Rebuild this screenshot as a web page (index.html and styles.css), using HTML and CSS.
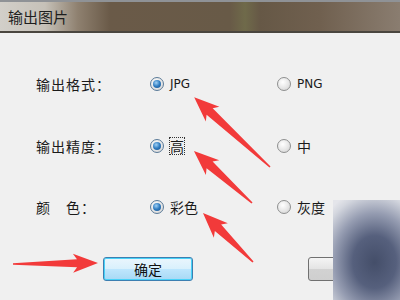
FILE: index.html
```html
<!DOCTYPE html>
<html lang="zh-CN">

<head>
    <meta charset="UTF-8">
    <title>输出图片</title>
    <link rel="stylesheet" href="styles.css">
</head>

<body>
    <div class="dialog">
        <div class="titlebar">输出图片</div>

        <div class="form">
            <div class="label">输出格式：</div>
            <div class="option"><span class="radio checked"></span><span class="latin">JPG</span></div>
            <div class="option"><span class="radio"></span><span class="latin">PNG</span></div>

            <div class="label">输出精度：</div>
            <div class="option"><span class="radio checked"></span><span class="focus">高</span></div>
            <div class="option"><span class="radio"></span><span>中</span></div>

            <div class="label">颜　色：</div>
            <div class="option"><span class="radio checked"></span><span>彩色</span></div>
            <div class="option"><span class="radio"></span><span>灰度</span></div>
        </div>

        <div class="buttons">
            <button class="btn primary">确定</button>
            <button class="btn">取消</button>
        </div>
    </div>

    <!-- red arrows drawn over the screenshot -->
    <svg class="arrows" width="400" height="300" viewBox="0 0 400 300">
        <g fill="#f23a3a">
            <path transform="translate(270,167) rotate(222.6)" d="M0,-0.8 L82,-4.5 L78,-10 L103,0 L78,10 L82,4.5 L0,0.8 Z" />
            <path transform="translate(252,203) rotate(221.9)" d="M0,-0.8 L57,-4.5 L53,-10 L78,0 L53,10 L57,4.5 L0,0.8 Z" />
            <path transform="translate(253,262) rotate(224.4)" d="M0,-0.8 L49,-4.5 L45,-10 L70,0 L45,10 L49,4.5 L0,0.8 Z" />
            <path transform="translate(13,264) rotate(-0.7)" d="M0,-0.8 L64,-4 L60,-9.5 L85,0 L60,9.5 L64,4 L0,0.8 Z" />
        </g>
    </svg>

    <div class="smudge"></div>
</body>

</html>
```

FILE: styles.css
```css
* {
    padding: 0;
    margin: 0;
    box-sizing: border-box;
}

body {
    width: 400px;
    height: 300px;
    overflow: hidden;
    background-color: #f0f0f0;
    font-family: "Noto Sans CJK SC", "Liberation Sans", sans-serif;
    font-size: 14px;
    color: #1a1a1a;
    position: relative;
}

.titlebar {
    height: 33px;
    padding-left: 8px;
    line-height: 29px;
    font-size: 15px;
    color: #1e1e1e;
    border-top: 2px solid #8f9296;
    border-bottom: 2px solid #4a463f;
    background: linear-gradient(to right, #d2cfc9 0px, #c6c1b8 45px, #8e806f 78px, #6a5a48 110px, #685a47 230px, #6f6a4a 245px, #665846 260px, #70604f 320px, #8a7d70 400px);
}

.form {
    display: grid;
    grid-template-columns: 114px 127px auto;
    grid-auto-rows: 20px;
    row-gap: 41.5px;
    padding: 41px 0 0 36px;
    align-items: center;
}

.label {
    letter-spacing: 1px;
}

.option {
    display: flex;
    align-items: center;
    gap: 6px;
}

.radio {
    width: 14px;
    height: 14px;
    border-radius: 50%;
    border: 1px solid #8e8f8f;
    background: radial-gradient(circle at 40% 35%, #ffffff 0%, #e6e6e6 55%, #cfcfcf 100%);
    position: relative;
}

.radio.checked {
    border-color: #5a7a98;
}

.radio.checked::after {
    content: "";
    position: absolute;
    left: 2px;
    top: 2px;
    width: 8px;
    height: 8px;
    border-radius: 50%;
    background: radial-gradient(circle at 40% 35%, #9fd0f5 0%, #2f7cc0 50%, #1b4f8a 100%);
}

.latin {
    font-family: "DejaVu Sans", sans-serif;
    font-size: 12px;
}

.focus {
    outline: 1px dotted #333;
    outline-offset: 0;
    line-height: 16px;
}

.buttons {
    display: flex;
    padding: 40px 0 0 103px;
    gap: 115px;
}

.btn {
    width: 90px;
    height: 24px;
    border-radius: 3px;
    border: 1px solid #707070;
    background: linear-gradient(#f4f4f4, #e4e4e4 50%, #d2d2d2 51%, #cfcfcf);
    font-family: "Noto Sans CJK SC", sans-serif;
    font-size: 14px;
    color: #111;
}

.btn.primary {
    border-color: #3c7fb1;
    background: linear-gradient(#eaf6fd, #d9f0fc 50%, #bee6fd 51%, #a7d9f5);
    box-shadow: inset 0 0 0 1px #48d2f8;
}

.arrows {
    position: absolute;
    left: 0;
    top: 0;
}

.smudge {
    position: absolute;
    left: 333px;
    top: 200px;
    width: 67px;
    height: 100px;
    background: radial-gradient(ellipse 62px 75px at 62% 62%, #444e69 0%, #56607d 35%, #959cb1 65%, #d3d6de 90%, #e4e5ea 100%);
}
```
